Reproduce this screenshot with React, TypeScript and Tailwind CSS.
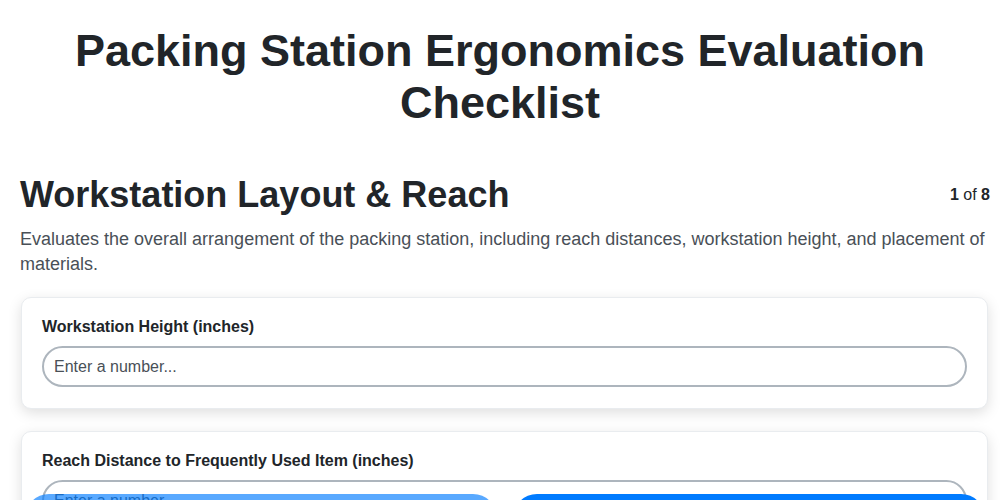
import React, { useState } from 'react'

const fields = [
  { id: 'height', label: 'Workstation Height (inches)' },
  { id: 'reach', label: 'Reach Distance to Frequently Used Item (inches)' },
  { id: 'overhead', label: 'Highest Shelf Height (inches)' },
]

const App: React.FC = () => {
  const [values, setValues] = useState<Record<string, string>>({})

  return (
    <div className="min-h-screen bg-white font-['Liberation_Sans',Arial,sans-serif] text-[#212529]">
      <div className="pt-[25px] pl-5 pr-[10px] pb-32">
        <h1 className="mr-[10px] text-center text-[45px] font-bold leading-[52px] px-10">
          Packing Station Ergonomics Evaluation Checklist
        </h1>

        <div className="mt-[44px] flex items-center justify-between">
          <h2 className="text-[36px] font-bold leading-[44px]">Workstation Layout &amp; Reach</h2>
          <span className="text-base">
            <span className="font-bold">1</span> of <span className="font-bold">8</span>
          </span>
        </div>
        <p className="mt-[10px] text-[18px] leading-[25px] text-[#495057]">
          Evaluates the overall arrangement of the packing station, including reach distances, workstation height, and
          placement of materials.
        </p>

        <div className="mt-[20px] flex flex-col gap-[22px] pl-px pr-[2px]">
          {fields.map((f) => (
            <div
              key={f.id}
              className="rounded-[10px] border border-[#e9ecef] bg-white px-5 pt-[19px] pb-[21px] shadow-[0_4px_14px_rgba(0,0,0,0.13)]"
            >
              <label htmlFor={f.id} className="block text-base font-bold leading-5">
                {f.label}
              </label>
              <input
                id={f.id}
                type="number"
                placeholder="Enter a number..."
                value={values[f.id] ?? ''}
                onChange={(e) => setValues((v) => ({ ...v, [f.id]: e.target.value }))}
                className="mt-[9px] block h-[41px] w-full rounded-full border-2 border-[#adb5bd] px-[10px] text-base text-[#212529] placeholder:text-[#495057] outline-none"
              />
            </div>
          ))}
        </div>
      </div>

      <div className="fixed left-0 right-0 top-[494px] flex gap-4 pl-[25px] pr-[15px]">
        <button disabled className="h-12 flex-1 rounded-full bg-[#007bff] text-white font-bold opacity-65">
          Previous
        </button>
        <button className="h-12 flex-1 rounded-full bg-[#007bff] text-white font-bold">Next</button>
      </div>
    </div>
  )
}

export default App
